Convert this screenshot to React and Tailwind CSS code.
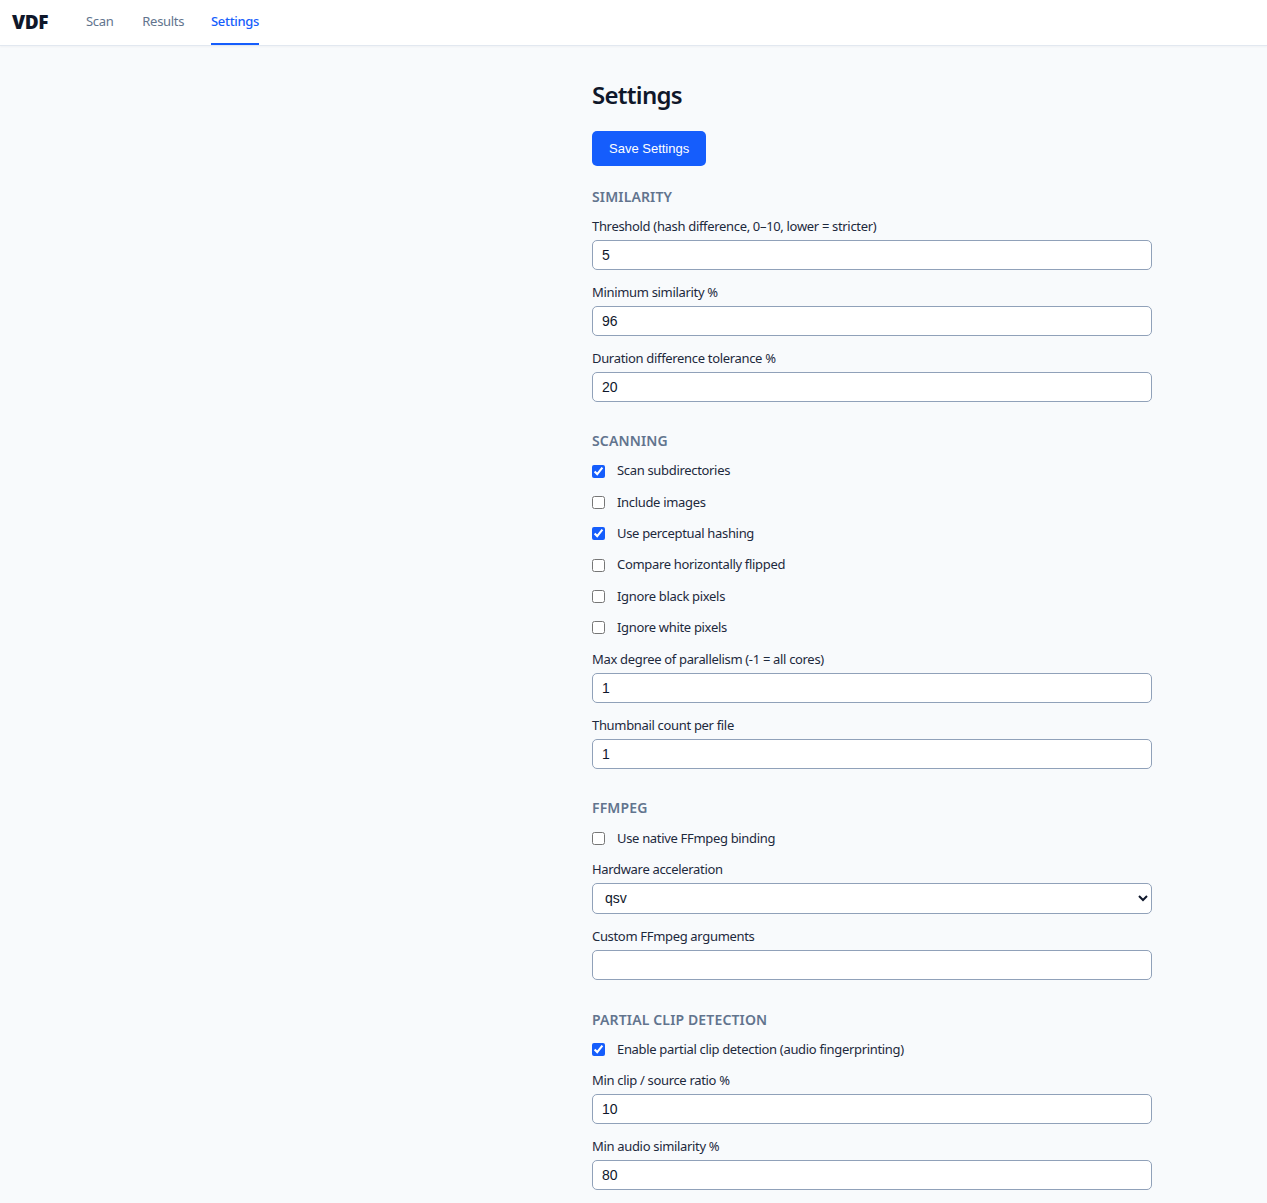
import React, { useState } from "react";

const ui = { fontFamily: '"Noto Sans", "Segoe UI", sans-serif' };
const ctl = { fontFamily: '"Liberation Sans", Arial, sans-serif' };

function SectionTitle({ children }) {
    return (
        <h2 className="text-[14px] leading-5 font-semibold uppercase tracking-[0.01em] text-slate-500 mb-2.5">
            {children}
        </h2>
    );
}

function Field({ label, value, onChange }) {
    return (
        <div>
            <label className="block text-[13px] leading-[18px] tracking-[-0.025em] text-slate-800 mb-[5px]">{label}</label>
            <input
                type="text"
                value={value}
                onChange={e => onChange(e.target.value)}
                style={ctl}
                className="block w-full h-[30px] px-[9px] text-[14px] text-slate-900 bg-white border border-slate-400 rounded-[5px] outline-none"
            />
        </div>
    );
}

function Check({ label, checked, onChange }) {
    return (
        <label className="flex items-center h-5 text-[13px] tracking-[-0.025em] text-slate-800 cursor-pointer">
            <input
                type="checkbox"
                checked={checked}
                onChange={e => onChange(e.target.checked)}
                className="w-[13px] h-[13px] m-0 mr-3 accent-blue-600"
            />
            {label}
        </label>
    );
}

export default function App() {
    const [s, setS] = useState({
        threshold: "5",
        minSim: "96",
        duration: "20",
        subdirs: true,
        images: false,
        phash: true,
        flipped: false,
        black: false,
        white: false,
        parallel: "1",
        thumbs: "1",
        native: false,
        hw: "qsv",
        args: "",
        partial: true,
        clipRatio: "10",
        audioSim: "80",
    });
    const set = k => v => setS(p => ({ ...p, [k]: v }));

    return (
        <div style={ui} className="min-h-screen bg-[#f8fafc] text-slate-900">
            {/* top nav */}
            <header className="h-[46px] bg-white border-b border-slate-200 shadow-[0_1px_2px_rgba(15,23,42,0.04)] flex items-stretch px-3">
                <div className="flex items-center text-[19px] font-black tracking-tight text-[#0f172a] mr-[38px]">VDF</div>
                <nav className="flex items-stretch text-[13px] tracking-[-0.025em]">
                    <a className="flex items-center text-slate-500 border-b-2 border-transparent">Scan</a>
                    <a className="flex items-center ml-[29px] text-slate-500 border-b-2 border-transparent">Results</a>
                    <a className="flex items-center ml-[27px] text-blue-600 font-medium border-b-2 border-blue-600 pt-[1px]">Settings</a>
                </nav>
            </header>

            <main className="w-[560px] ml-[592px] pt-[33px] pb-3">
                <h1 className="text-[24px] leading-8 font-semibold tracking-[-0.03em] text-[#0f172a]">Settings</h1>
                <button
                    style={ctl}
                    className="mt-5 h-[35px] px-[17px] rounded-[5px] bg-blue-600 text-white text-[13px]"
                >
                    Save Settings
                </button>

                <section className="mt-[21px]">
                    <SectionTitle>Similarity</SectionTitle>
                    <div className="flex flex-col gap-[13px]">
                        <Field label="Threshold (hash difference, 0–10, lower = stricter)" value={s.threshold} onChange={set("threshold")} />
                        <Field label="Minimum similarity %" value={s.minSim} onChange={set("minSim")} />
                        <Field label="Duration difference tolerance %" value={s.duration} onChange={set("duration")} />
                    </div>
                </section>

                <section className="mt-[29px]">
                    <SectionTitle>Scanning</SectionTitle>
                    <div className="flex flex-col gap-[11.4px]">
                        <Check label="Scan subdirectories" checked={s.subdirs} onChange={set("subdirs")} />
                        <Check label="Include images" checked={s.images} onChange={set("images")} />
                        <Check label="Use perceptual hashing" checked={s.phash} onChange={set("phash")} />
                        <Check label="Compare horizontally flipped" checked={s.flipped} onChange={set("flipped")} />
                        <Check label="Ignore black pixels" checked={s.black} onChange={set("black")} />
                        <Check label="Ignore white pixels" checked={s.white} onChange={set("white")} />
                        <div className="mt-[1px]">
                            <Field label="Max degree of parallelism (-1 = all cores)" value={s.parallel} onChange={set("parallel")} />
                        </div>
                        <div className="mt-[1.6px]">
                            <Field label="Thumbnail count per file" value={s.thumbs} onChange={set("thumbs")} />
                        </div>
                    </div>
                </section>

                <section className="mt-[29px]">
                    <SectionTitle>FFmpeg</SectionTitle>
                    <div className="flex flex-col gap-[11.4px]">
                        <Check label="Use native FFmpeg binding" checked={s.native} onChange={set("native")} />
                        <div>
                            <label className="block text-[13px] leading-[18px] tracking-[-0.025em] text-slate-800 mb-[5px]">Hardware acceleration</label>
                            <select
                                value={s.hw}
                                onChange={e => set("hw")(e.target.value)}
                                style={ctl}
                                className="block w-full h-[31px] px-2 text-[14px] text-slate-900 bg-white border border-slate-400 rounded-[5px] outline-none"
                            >
                                <option value="none">none</option>
                                <option value="auto">auto</option>
                                <option value="qsv">qsv</option>
                                <option value="cuda">cuda</option>
                            </select>
                        </div>
                        <div className="mt-[1.6px]">
                            <Field label="Custom FFmpeg arguments" value={s.args} onChange={set("args")} />
                        </div>
                    </div>
                </section>

                <section className="mt-[30px]">
                    <SectionTitle>Partial clip detection</SectionTitle>
                    <div className="flex flex-col gap-[11.4px]">
                        <Check label="Enable partial clip detection (audio fingerprinting)" checked={s.partial} onChange={set("partial")} />
                        <Field label="Min clip / source ratio %" value={s.clipRatio} onChange={set("clipRatio")} />
                        <div className="mt-[1.6px]">
                            <Field label="Min audio similarity %" value={s.audioSim} onChange={set("audioSim")} />
                        </div>
                    </div>
                </section>
            </main>
        </div>
    );
}
